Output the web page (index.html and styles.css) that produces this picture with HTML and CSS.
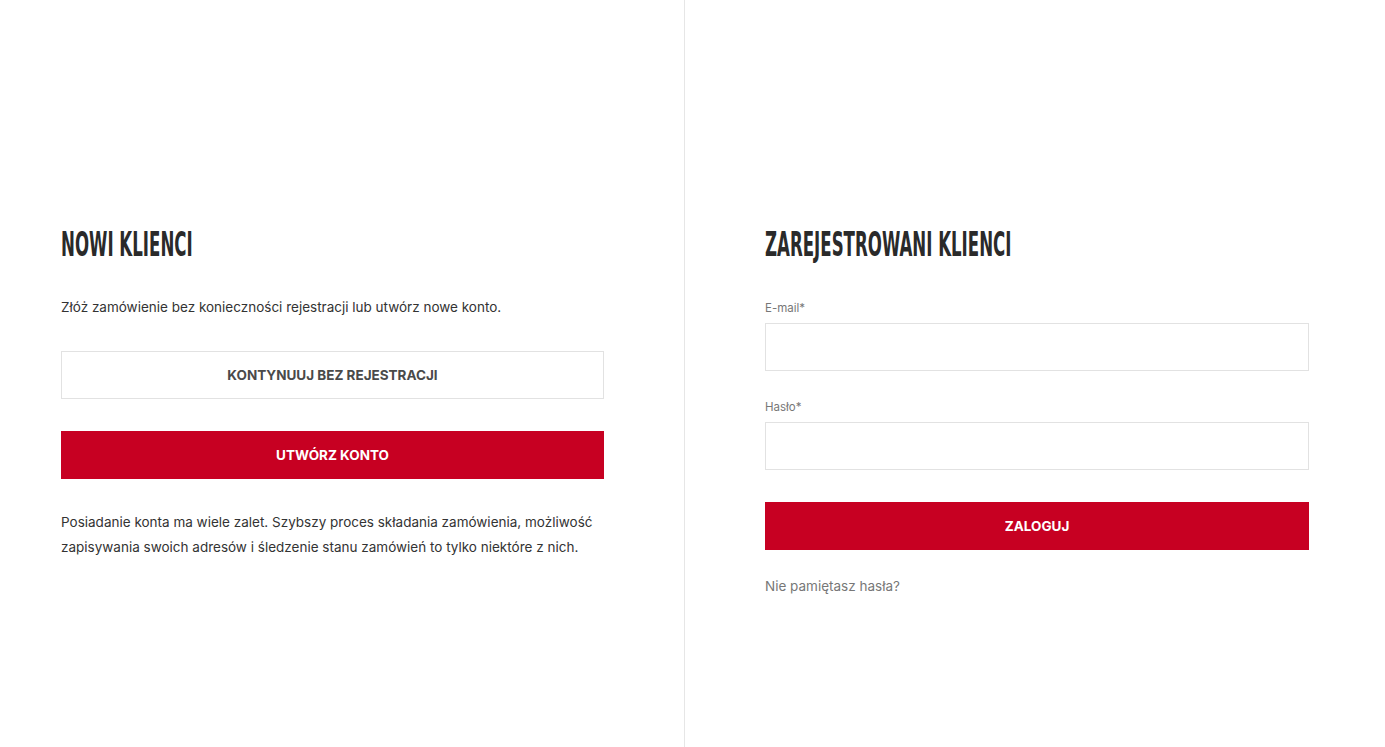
FILE: index.html
```html
<!DOCTYPE html>
<html lang="pl">
<head>
<meta charset="utf-8">
<title>Logowanie</title>
<link rel="stylesheet" href="styles.css">
</head>
<body>
<main class="login">
  <section class="col col-new">
    <h2 class="title"><span class="title-text">NOWI KLIENCI</span></h2>
    <p class="lead">Złóż zamówienie bez konieczności rejestracji lub utwórz nowe konto.</p>
    <a class="btn btn-outline" href="#">KONTYNUUJ BEZ REJESTRACJI</a>
    <a class="btn btn-red btn-create" href="#">UTWÓRZ KONTO</a>
    <p class="info">Posiadanie konta ma wiele zalet. Szybszy proces składania zamówienia, możliwość zapisywania swoich adresów i śledzenie stanu zamówień to tylko niektóre z nich.</p>
  </section>
  <section class="col col-reg">
    <h2 class="title"><span class="title-text">ZAREJESTROWANI KLIENCI</span></h2>
    <form class="form">
      <label class="label label-email" for="email">E-mail*</label>
      <input class="input" id="email" type="email">
      <label class="label label-pass" for="pass">Hasło*</label>
      <input class="input" id="pass" type="password">
      <button class="btn btn-red btn-login" type="button">ZALOGUJ</button>
      <a class="forgot" href="#">Nie pamiętasz hasła?</a>
    </form>
  </section>
</main>
</body>
</html>
```
FILE: styles.css
```css
* { box-sizing: border-box; }
html, body { margin: 0; padding: 0; background: #fff; }
body {
  font-family: Inter, "Noto Sans", sans-serif;
  color: #333;
  font-size: 13.5px;
}
.login {
  display: flex;
  min-height: 747px;
}
.col {
  padding-top: 225px;
  display: flex;
  flex-direction: column;
}
.col-new {
  width: 685px;
  padding-left: 61px;
  padding-right: 80px;
  border-right: 1px solid #e6e6e6;
}
.col-reg {
  width: 700px;
  padding-left: 80px;
  padding-right: 76px;
}
.title {
  margin: 0;
  height: 40px;
  line-height: 40px;
  font-family: "DejaVu Sans", sans-serif;
  font-stretch: condensed;
  font-weight: bold;
  font-size: 33px;
  color: #2a2a2a;
  white-space: nowrap;
}
.title-text {
  display: inline-block;
  transform: scaleX(0.56);
  transform-origin: left center;
}
.lead {
  margin: 30px 0 0;
  line-height: 25px;
  color: #333;
}
.btn {
  display: flex;
  align-items: center;
  justify-content: center;
  height: 48px;
  font-family: Inter, "Noto Sans", sans-serif;
  font-weight: 700;
  font-size: 13.5px;
  text-decoration: none;
  border: 1px solid transparent;
  width: 100%;
  cursor: pointer;
}
.btn-outline {
  margin-top: 31px;
  border-color: #e2e2e2;
  color: #4a4a4a;
  background: #fff;
}
.btn-red {
  background: #c70022;
  border-color: #c70022;
  color: #fff;
}
.btn-create { margin-top: 32px; }
.info {
  margin: 31px 0 0;
  line-height: 25px;
  color: #333;
}
.form {
  display: flex;
  flex-direction: column;
}
.label {
  font-size: 11.5px;
  line-height: 16px;
  color: #777;
}
.label-email { margin-top: 35px; }
.label-pass { margin-top: 28px; }
.input {
  margin-top: 7px;
  height: 48px;
  width: 100%;
  border: 1px solid #e2e2e2;
  background: #fff;
  font: inherit;
  padding: 0 12px;
}
.label-pass + .input { margin-top: 7px; }
.btn-login { margin-top: 32px; }
.forgot {
  margin-top: 26px;
  line-height: 20px;
  color: #777;
  text-decoration: none;
  align-self: flex-start;
}
```
